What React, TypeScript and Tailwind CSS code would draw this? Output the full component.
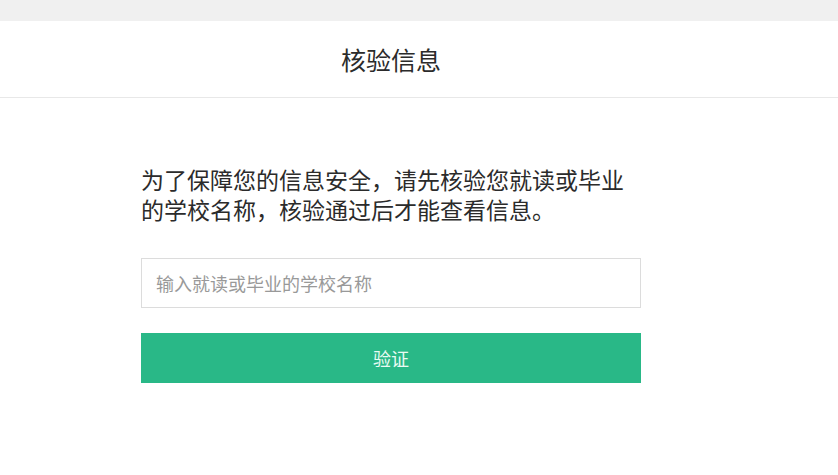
import React from 'react';

export default function App() {
  return (
    <div
      className="min-h-[475px] w-full bg-white text-[#333]"
      style={{ fontFamily: '"Noto Sans CJK SC", "Microsoft YaHei", sans-serif' }}
    >
      <div className="h-[21px] bg-[#f0f0f0]" />
      <header className="flex h-[77px] items-center justify-center border-b border-[#e8e8e8] pr-[56px]">
        <h1 className="text-[25px] leading-none font-normal text-[#2b2b2b]">核验信息</h1>
      </header>

      <main className="ml-[141px] w-[500px] pt-[66px]">
        <p className="text-[23px] leading-[30px] text-[#2b2b2b]">
          为了保障您的信息安全，请先核验您就读或毕业的学校名称，核验通过后才能查看信息。
        </p>
        <input
          type="text"
          placeholder="输入就读或毕业的学校名称"
          className="mt-[34px] block h-[50px] w-full border border-[#dcdcdc] px-[14px] text-[18px] outline-none placeholder:text-[#999]"
        />
        <button className="mt-[25px] flex h-[50px] w-full items-center justify-center bg-[#29b887] text-[18px] text-[#e9fbf3]">
          验证
        </button>
      </main>
    </div>
  );
}
